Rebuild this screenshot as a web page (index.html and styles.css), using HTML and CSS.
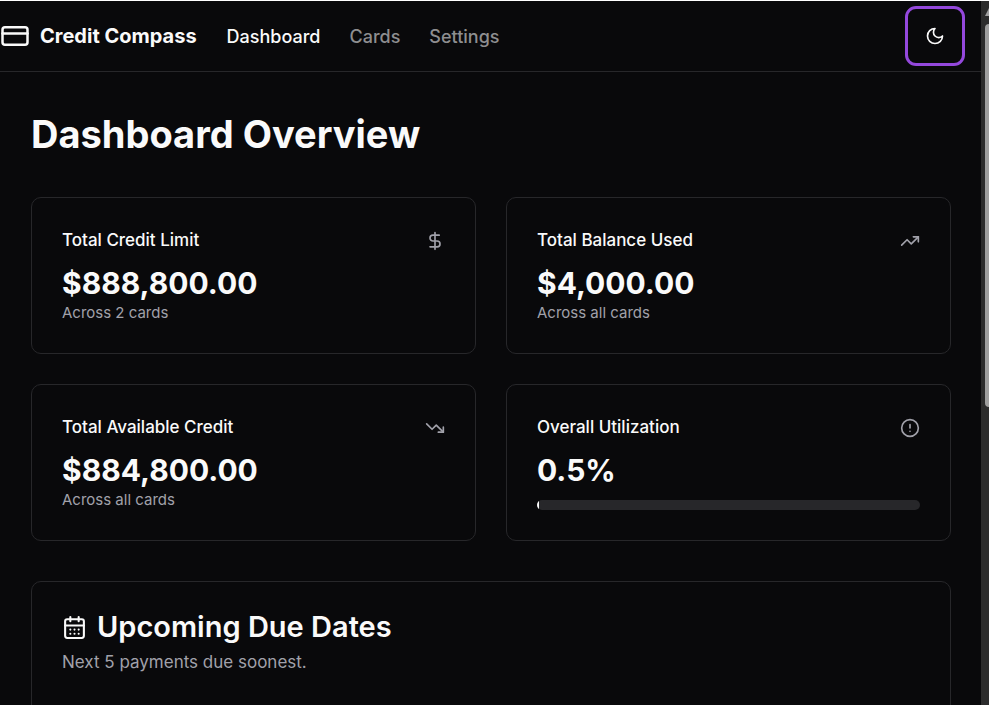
FILE: index.html
```html
<!DOCTYPE html>
<html lang="en">
<head>
<meta charset="utf-8">
<meta name="viewport" content="width=device-width, initial-scale=1">
<title>Credit Compass</title>
<link rel="stylesheet" href="styles.css">
</head>
<body>
<div class="shell">
  <div class="page">
    <header class="header">
      <a class="brand" href="#">
        <svg class="icon brand-icon" viewBox="0 0 24 24" aria-hidden="true"><rect width="20" height="14" x="2" y="5" rx="2"/><path d="M2 10h20"/></svg>
        <span>Credit Compass</span>
      </a>
      <nav class="nav">
        <a class="nav-link active" href="#">Dashboard</a>
        <a class="nav-link" href="#">Cards</a>
        <a class="nav-link" href="#">Settings</a>
      </nav>
      <button class="theme-toggle" type="button" aria-label="Toggle theme">
        <svg class="icon" viewBox="0 0 24 24" aria-hidden="true"><path d="M12 3a6 6 0 0 0 9 9 9 9 0 1 1-9-9Z"/></svg>
      </button>
    </header>
    <main class="main">
      <h1 class="title">Dashboard Overview</h1>
      <div class="stats">
        <section class="card">
          <div class="card-head">
            <h2 class="card-label">Total Credit Limit</h2>
            <svg class="icon" viewBox="0 0 24 24" aria-hidden="true"><path d="M12 2v20"/><path d="M17 5H9.500a3.500 3.500 0 0 0 0 7h5a3.500 3.500 0 0 1 0 7H6"/></svg>
          </div>
          <div class="value">$888,800.00</div>
          <p class="note">Across 2 cards</p>
        </section>
        <section class="card">
          <div class="card-head">
            <h2 class="card-label">Total Balance Used</h2>
            <svg class="icon" viewBox="0 0 24 24" aria-hidden="true"><path d="m22 7-8.500 8.500-5-5L2 17"/><path d="M16 7h6v6"/></svg>
          </div>
          <div class="value">$4,000.00</div>
          <p class="note">Across all cards</p>
        </section>
        <section class="card">
          <div class="card-head">
            <h2 class="card-label">Total Available Credit</h2>
            <svg class="icon" viewBox="0 0 24 24" aria-hidden="true"><path d="m22 17-8.500-8.500-5 5L2 7"/><path d="M16 17h6v-6"/></svg>
          </div>
          <div class="value">$884,800.00</div>
          <p class="note">Across all cards</p>
        </section>
        <section class="card">
          <div class="card-head">
            <h2 class="card-label">Overall Utilization</h2>
            <svg class="icon" viewBox="0 0 24 24" aria-hidden="true"><circle cx="12" cy="12" r="10"/><path d="M12 8v4M12 16h.01"/></svg>
          </div>
          <div class="value">0.5%</div>
          <div class="progress" role="progressbar" aria-label="Overall utilization" aria-valuenow="0.5" aria-valuemin="0" aria-valuemax="100"><div class="progress-fill" style="width:0.5%"></div></div>
        </section>
      </div>
      <section class="card due">
        <h2 class="due-title">
          <svg class="icon due-icon" viewBox="0 0 24 24" aria-hidden="true"><path d="M8 2v4M16 2v4"/><rect width="18" height="18" x="3" y="4" rx="2"/><path d="M3 10h18M8 14h.01M12 14h.01M16 14h.01M8 18h.01M12 18h.01M16 18h.01"/></svg>
          Upcoming Due Dates
        </h2>
        <p class="due-note">Next 5 payments due soonest.</p>
      </section>
    </main>
  </div>
  <div class="scroll-track" aria-hidden="true">
    <svg class="scroll-arrow" viewBox="0 0 4 8"><path d="M0 8 4 0v8Z"/></svg>
    <div class="scroll-thumb"></div>
  </div>
</div>
</body>
</html>
```
FILE: styles.css
```css
:root {
  --bg: #09090b;
  --text: #fafafa;
  --muted: #a1a1aa;
  --line: #27272a;
}

* {
  box-sizing: border-box;
}

body,
h1,
h2,
p {
  margin: 0;
}

body {
  background: var(--bg);
  color: var(--text);
  font-family: Inter, "Liberation Sans", sans-serif;
}

a {
  color: inherit;
  text-decoration: none;
}

.shell {
  display: flex;
  height: 100vh;
  overflow: hidden;
  border-top: 1px solid #fff;
}

.page {
  flex: 1;
  min-width: 0;
}

.header {
  display: flex;
  align-items: center;
  gap: 30px;
  padding: 5px 16px 5px 0;
  border-bottom: 1px solid var(--line);
}

.icon {
  flex: none;
  width: 20px;
  height: 20px;
  fill: none;
  stroke: currentColor;
  stroke-width: 2;
  stroke-linecap: round;
  stroke-linejoin: round;
}

.brand {
  display: flex;
  align-items: center;
  gap: 10px;
  font-size: 20px;
  font-weight: 700;
  line-height: 28px;
}

.brand-icon {
  width: 30px;
  height: 30px;
}

.nav {
  display: flex;
  gap: 29px;
  font-size: 18px;
  font-weight: 500;
  line-height: 25px;
}

.nav-link {
  color: #8e8e90;
}

.nav-link.active {
  color: var(--text);
}

.theme-toggle {
  display: flex;
  align-items: center;
  justify-content: center;
  width: 60px;
  height: 60px;
  margin-left: auto;
  padding: 0;
  border: 3px solid #9448dc;
  border-radius: 11px;
  background: var(--bg);
  color: var(--text);
}

.main {
  padding: 40px 30px 40px 31px;
}

.title {
  margin-bottom: 40px;
  font-size: 38px;
  font-weight: 700;
  line-height: 45px;
}

.stats {
  display: grid;
  grid-template-columns: 1fr 1fr;
  gap: 30px;
}

.card {
  padding: 30px;
  border: 1px solid var(--line);
  border-radius: 10px;
}

.card-head {
  display: flex;
  align-items: center;
  justify-content: space-between;
  margin-bottom: 10px;
}

.card-head .icon {
  color: var(--muted);
}

.card-label {
  font-size: 17px;
  font-weight: 500;
  line-height: 25px;
}

.value {
  font-size: 30px;
  font-weight: 700;
  line-height: 40px;
}

.note {
  color: var(--muted);
  font-size: 15px;
  line-height: 20px;
}

.progress {
  height: 10px;
  margin-top: 10px;
  overflow: hidden;
  border-radius: 5px;
  background: var(--line);
}

.progress-fill {
  height: 100%;
  background: var(--text);
}

.due {
  min-height: 300px;
  margin-top: 40px;
}

.due-title {
  display: flex;
  align-items: center;
  gap: 10px;
  margin-bottom: 8px;
  font-size: 29px;
  font-weight: 600;
  line-height: 30px;
}

.due-icon {
  width: 25px;
  height: 25px;
}

.due-note {
  color: var(--muted);
  font-size: 17px;
  line-height: 25px;
}

.scroll-track {
  display: flex;
  flex: 0 0 8px;
  flex-direction: column;
  align-items: flex-end;
  gap: 8px;
  padding-top: 7px;
  background: #2c2c2c;
}

.scroll-arrow {
  width: 4px;
  height: 8px;
  fill: #9f9f9f;
}

.scroll-thumb {
  width: 4px;
  height: 55%;
  border-radius: 4px 0 0 4px;
  background: #9f9f9f;
}
```
